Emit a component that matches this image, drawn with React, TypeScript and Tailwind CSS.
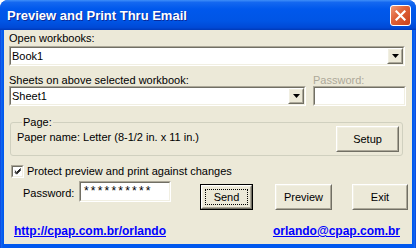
import React from "react";

function Sunken({ className, children }: { className: string; children?: React.ReactNode }) {
  return (
    <div className={`border border-t-[#ACA899] border-l-[#ACA899] border-b-white border-r-white ${className}`}>
      <div className="h-full w-full border border-t-[#716F64] border-l-[#716F64] border-b-[#F1EFE2] border-r-[#F1EFE2] bg-white flex items-center">
        {children}
      </div>
    </div>
  );
}

function Raised({ className, children }: { className: string; children?: React.ReactNode }) {
  return (
    <div className={`border border-t-white border-l-white border-b-[#716F64] border-r-[#716F64] ${className}`}>
      <div className="h-full w-full border border-t-[#F1EFE2] border-l-[#F1EFE2] border-b-[#ACA899] border-r-[#ACA899] bg-[#ECE9D8] flex items-center justify-center">
        {children}
      </div>
    </div>
  );
}

function Arrow() {
  return (
    <svg width="7" height="4" viewBox="0 0 7 4">
      <path d="M0 0h7L3.5 4z" fill="#000" />
    </svg>
  );
}

function Combo({ className, value }: { className: string; value: string }) {
  return (
    <Sunken className={className}>
      <span className="flex-1 pl-[1px] text-[11px] leading-[13px]">{value}</span>
      <Raised className="w-[16px] h-[16px] mr-0">
        <Arrow />
      </Raised>
    </Sunken>
  );
}

export default function App() {
  return (
    <div className="w-[416px] h-[248px] bg-white font-['Liberation_Sans',sans-serif] text-black">
      <div className="w-full h-full flex flex-col rounded-t-[8px] overflow-hidden bg-[#0A52DF]">
        <div className="h-[30px] shrink-0 flex items-center justify-between pl-[7px] pr-[5px] bg-[linear-gradient(to_bottom,#3E8EF8_0%,#1468F0_8%,#0058EC_30%,#0055E5_70%,#0049D6_92%,#0039B8_100%)]">
          <span className="text-white font-bold text-[13px] leading-[16px] mt-[1px] [text-shadow:1px_1px_#0A2A9A]">
            Preview and Print Thru Email
          </span>
          <div className="w-[21px] h-[21px] rounded-[3px] border border-white bg-[linear-gradient(135deg,#F09A78_0%,#E0643A_40%,#C8401A_100%)] flex items-center justify-center">
            <svg width="11" height="11" viewBox="0 0 11 11">
              <path d="M1.5 1.5L9.5 9.5M9.5 1.5L1.5 9.5" stroke="#fff" strokeWidth="2.2" strokeLinecap="square" />
            </svg>
          </div>
        </div>
        <div className="flex-1 pl-[4px] pr-[4px] pb-[4px] bg-[linear-gradient(to_right,#0831D9_0px,#166AEE_1px,#0058EE_3px,#0058EE_calc(100%-3px),#166AEE_calc(100%-1px),#0831D9_100%)]">
          <div className="h-[214px] bg-[#ECE9D8] flex flex-col text-[11px] leading-[13px]">
            <div className="pl-[5px] pt-[2px] h-[15px]">Open workbooks:</div>
            <div className="pl-[5px] mt-[1px]">
              <Combo className="w-[396px] h-[20px]" value="Book1" />
            </div>

            <div className="flex pl-[5px] mt-[8px]">
              <div className="flex flex-col w-[297px]">
                <div className="h-[12px]">Sheets on above selected workbook:</div>
                <Combo className="w-[297px] h-[20px]" value="Sheet1" />
              </div>
              <div className="flex flex-col w-[93px] ml-[7px]">
                <div className="h-[12px] text-[#ACA899]">Password:</div>
                <Sunken className="w-[93px] h-[20px]" />
              </div>
            </div>

            <div className="relative ml-[6px] mt-[16px] w-[393px] h-[34px] border border-[#D0D0BF] rounded-[3px] flex items-start justify-between pl-[6px] pr-[3px] pt-[3px]">
              <span className="absolute left-[11px] top-[-7px] px-[1px] bg-[#ECE9D8]">Page:</span>
              <span className="mt-[5px]">Paper name: Letter (8-1/2 in. x 11 in.)</span>
              <Raised className="w-[63px] h-[26px]">Setup</Raised>
            </div>

            <div className="flex items-center ml-[7px] mt-[8px] h-[14px]">
              <Sunken className="w-[13px] h-[13px]">
                <svg width="9" height="9" viewBox="0 0 9 9" className="ml-[1px]">
                  <path d="M1 3.5L3 5.5L7.5 1M1 4.5L3 6.5L7.5 2M1 5.5L3 7.5L7.5 3" stroke="#000" strokeWidth="1" fill="none" />
                </svg>
              </Sunken>
              <span className="ml-[3px]">Protect preview and print against changes</span>
            </div>

            <div className="flex items-start mt-[3px]">
              <span className="pl-[19px] w-[75px] mt-[6px]">Password:</span>
              <Sunken className="w-[92px] h-[21px]">
                <span className="pl-[3px] text-[12px] tracking-[2.2px]">**********</span>
              </Sunken>
              <div className="ml-[29px] mt-[3px] w-[53px] h-[26px] border border-black">
                <Raised className="w-full h-full">
                  <div className="w-[43px] h-[16px] border border-dotted border-black flex items-center justify-center">
                    Send
                  </div>
                </Raised>
              </div>
              <Raised className="ml-[22px] mt-[3px] w-[57px] h-[26px]">Preview</Raised>
              <Raised className="ml-[20px] mt-[3px] w-[56px] h-[26px]">Exit</Raised>
            </div>

            <div className="flex justify-between items-end pl-[10px] pr-[12px] mt-[14px] text-[12px] leading-[14px]">
              <span className="font-bold underline text-[#0000FF]">http://cpap.com.br/orlando</span>
              <span className="font-bold underline text-[#0000FF]">orlando@cpap.com.br</span>
            </div>
          </div>
        </div>
      </div>
    </div>
  );
}
